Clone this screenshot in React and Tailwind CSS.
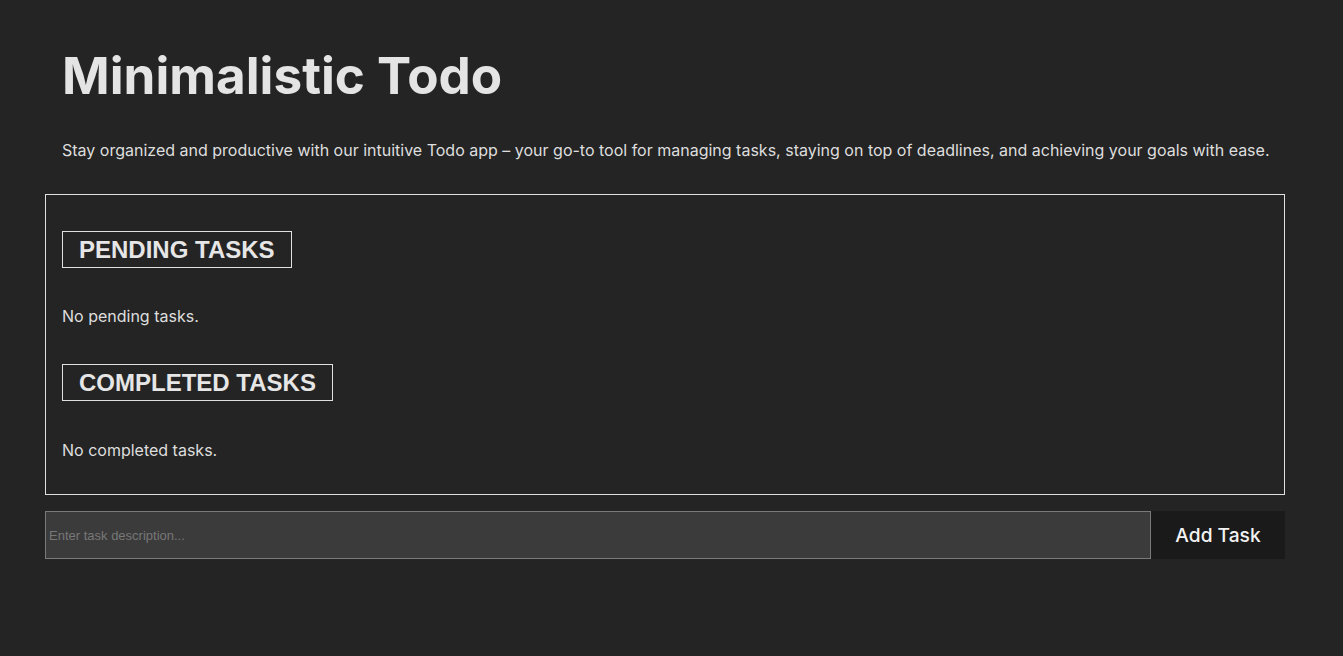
export default function App() {
  return (
    <div className="min-h-screen bg-[#242424] text-[#dedede] font-['Inter',sans-serif]">
      <div className="ml-[45px] w-[1240px] pt-[47px]">
        <header className="pl-[17px]">
          <h1 className="text-[51.2px] font-bold leading-[1.1] text-[#e4e4e4]">
            Minimalistic Todo
          </h1>
          <p className="mt-[35px] text-[16px] leading-6">
            Stay organized and productive with our intuitive Todo app – your go-to tool for managing tasks, staying on top of deadlines, and achieving your goals with ease.
          </p>
        </header>

        <section className="mt-8 border border-[#e0e0e0] px-4 pt-9 pb-8">
          <h2 className="inline-block border border-[#e0e0e0] px-4 py-[4px] font-['Liberation_Sans',Arial,sans-serif] text-[24px] font-bold uppercase leading-[27px] text-[#e6e6e6]">
            Pending Tasks
          </h2>
          <p className="mt-9 text-[16px] leading-6">No pending tasks.</p>

          <h2 className="mt-9 inline-block border border-[#e0e0e0] px-4 py-[4px] font-['Liberation_Sans',Arial,sans-serif] text-[24px] font-bold uppercase leading-[27px] text-[#e6e6e6]">
            Completed Tasks
          </h2>
          <p className="mt-[37px] text-[16px] leading-6">No completed tasks.</p>
        </section>

        <form className="mt-4 flex h-12" onSubmit={(e) => e.preventDefault()}>
          <input
            type="text"
            placeholder="Enter task description..."
            className="h-12 flex-1 border border-[#7a7a7a] bg-[#3b3b3b] px-[3px] font-['Liberation_Sans',Arial,sans-serif] text-[13px] text-[#dedede] outline-none placeholder:text-[#777777]"
          />
          <button
            type="submit"
            className="h-12 w-[134px] bg-[#1a1a1a] text-[19.2px] font-medium text-[#f2f2f2]"
          >
            Add Task
          </button>
        </form>
      </div>
    </div>
  )
}
